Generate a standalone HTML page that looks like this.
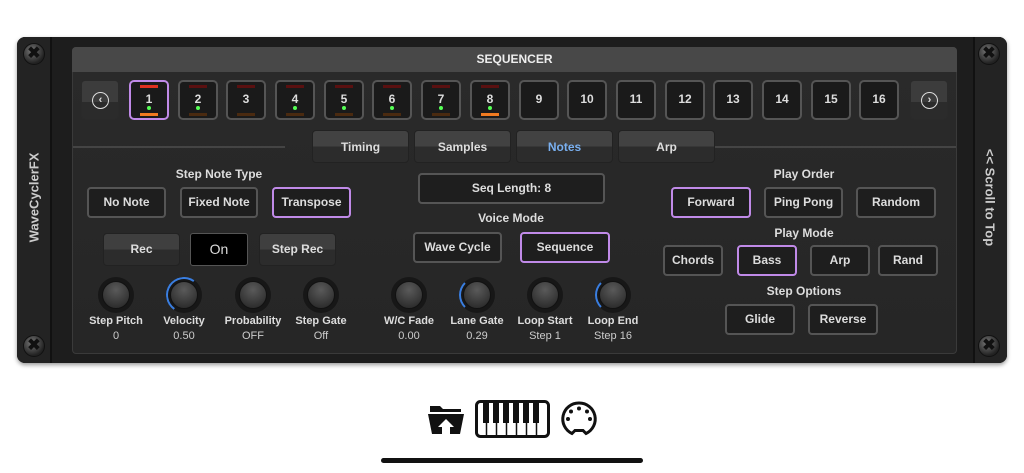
<!DOCTYPE html>
<html><head><meta charset="utf-8"><style>
*{box-sizing:border-box;margin:0;padding:0}
body{width:1024px;height:473px;background:#fff;position:relative;overflow:hidden;font-family:"Liberation Sans",sans-serif;font-weight:bold}
.a{position:absolute}
.outer{left:17px;top:37px;width:990px;height:326px;background:#1d1d1d;border-radius:8px;box-shadow:0 2px 4px rgba(0,0,0,.4)}
.rail{background:#232323}
.inner{left:72px;top:47px;width:885px;height:307px;background:linear-gradient(#2a2a2a,#262626);border:1px solid #3a3a3a;border-radius:4px}
.hdr{left:72px;top:47px;width:885px;height:25px;background:#484848;border-radius:4px 4px 0 0;color:#eee;font-size:12px;text-align:center;line-height:25px}
.screw{width:22px;height:22px;border-radius:50%;background:radial-gradient(circle at 40% 35%,#777,#222 70%);border:1px solid #111;color:#111;font-size:16px;text-align:center;line-height:20px}
.step{width:40px;height:40px;border:2px solid #555;border-radius:5px;background:#1a1a1a;color:#ddd;font-size:12px;text-align:center;line-height:34px}
.step .t{position:absolute;left:9px;top:3px;width:18px;height:3px;background:#5a1010}
.step .b{position:absolute;left:9px;bottom:2px;width:18px;height:3px;background:#4a2a10}
.step .d{position:absolute;left:16px;top:24px;width:4px;height:4px;border-radius:50%;background:#5f5}
.sel{border-color:#c08ae8!important}
.nav{width:38px;height:40px;border-radius:4px;background:linear-gradient(#3c3c3c 55%,#2b2b2b 55%);border:1px solid #2a2a2a}
.nav span{position:absolute;left:10px;top:11px;width:17px;height:17px;border:1.5px solid #ddd;border-radius:50%;color:#ddd;font-size:11px;text-align:center;line-height:14px}
.tab{width:97px;height:33px;border-radius:4px;background:linear-gradient(#424242 50%,#2c2c2c 50%);border:1px solid #222;color:#ddd;font-size:12px;text-align:center;line-height:33px}
.btn{height:31px;border:2px solid #555;border-radius:4px;background:#1e1e1e;color:#ddd;font-size:12px;text-align:center;line-height:27px}
.btn2{height:33px;border-radius:4px;background:linear-gradient(#3f3f3f 50%,#2c2c2c 50%);border:1px solid #222;color:#ddd;font-size:12px;text-align:center;line-height:31px}
.lbl{color:#ddd;font-size:12px;text-align:center;width:160px}
.knob{width:36px;height:36px;border-radius:50%;background:#171717}
.knob i{position:absolute;left:4px;top:4px;width:28px;height:28px;border-radius:50%;background:radial-gradient(circle at 50% 30%,#5a5a5a,#2a2a2a 85%);border:1px solid #111}
.arc{width:36px;height:36px;border-radius:50%;border:2px solid transparent}
.kl{width:90px;text-align:center;color:#ddd;font-size:11px}
.kv{width:90px;text-align:center;color:#ccc;font-size:11px;font-weight:normal}
.line{height:2px;background:#444}
</style></head><body>
<div class="a outer"></div>
<div class="a rail" style="left:17px;top:37px;width:35px;height:326px;border-radius:8px 0 0 8px;border-right:2px solid #111"></div>
<div class="a rail" style="left:973px;top:37px;width:34px;height:326px;border-radius:0 8px 8px 0;border-left:2px solid #111"></div>
<div class="a" style="left:-31px;top:190px;width:130px;text-align:center;color:#ccc;font-size:13px;transform:rotate(-90deg)">WaveCyclerFX</div>
<div class="a" style="left:930px;top:190px;width:120px;text-align:center;color:#ccc;font-size:13px;transform:rotate(90deg)">&lt;&lt; Scroll to Top</div>
<div class="a screw" style="left:23px;top:43px">✖</div>
<div class="a screw" style="left:978px;top:43px">✖</div>
<div class="a screw" style="left:23px;top:335px">✖</div>
<div class="a screw" style="left:978px;top:335px">✖</div>
<div class="a inner"></div>
<div class="a hdr">SEQUENCER</div>

<div class="a nav" style="left:81px;top:80px"><span>‹</span></div>
<div class="a nav" style="left:910px;top:80px"><span>›</span></div>

<div class="a step sel" style="left:129px;top:80px">1<div class="t" style="background:#e03020"></div><div class="d"></div><div class="b" style="background:#f07a20"></div></div>
<div class="a step" style="left:178px;top:80px">2<div class="t"></div><div class="d"></div><div class="b"></div></div>
<div class="a step" style="left:226px;top:80px">3<div class="t"></div><div class="b"></div></div>
<div class="a step" style="left:275px;top:80px">4<div class="t"></div><div class="d"></div><div class="b"></div></div>
<div class="a step" style="left:324px;top:80px">5<div class="t"></div><div class="d"></div><div class="b"></div></div>
<div class="a step" style="left:372px;top:80px">6<div class="t"></div><div class="d"></div><div class="b"></div></div>
<div class="a step" style="left:421px;top:80px">7<div class="t"></div><div class="d"></div><div class="b"></div></div>
<div class="a step" style="left:470px;top:80px">8<div class="t"></div><div class="d"></div><div class="b" style="background:#f07a20"></div></div>
<div class="a step" style="left:519px;top:80px">9</div>
<div class="a step" style="left:567px;top:80px">10</div>
<div class="a step" style="left:616px;top:80px">11</div>
<div class="a step" style="left:665px;top:80px">12</div>
<div class="a step" style="left:713px;top:80px">13</div>
<div class="a step" style="left:762px;top:80px">14</div>
<div class="a step" style="left:811px;top:80px">15</div>
<div class="a step" style="left:859px;top:80px">16</div>

<div class="a line" style="left:73px;top:146px;width:212px"></div>
<div class="a line" style="left:715px;top:146px;width:241px"></div>
<div class="a tab" style="left:312px;top:130px">Timing</div>
<div class="a tab" style="left:414px;top:130px">Samples</div>
<div class="a tab" style="left:516px;top:130px;color:#7ab0f0">Notes</div>
<div class="a tab" style="left:618px;top:130px">Arp</div>

<div class="a lbl" style="left:139px;top:167px">Step Note Type</div>
<div class="a btn" style="left:87px;top:187px;width:79px">No Note</div>
<div class="a btn" style="left:180px;top:187px;width:78px">Fixed Note</div>
<div class="a btn sel" style="left:272px;top:187px;width:79px">Transpose</div>

<div class="a btn" style="left:418px;top:173px;width:187px">Seq Length: 8</div>
<div class="a lbl" style="left:431px;top:211px">Voice Mode</div>
<div class="a btn" style="left:413px;top:232px;width:89px">Wave Cycle</div>
<div class="a btn sel" style="left:520px;top:232px;width:90px">Sequence</div>

<div class="a btn2" style="left:103px;top:233px;width:77px">Rec</div>
<div class="a" style="left:190px;top:233px;width:58px;height:33px;background:#000;border:1px solid #555;border-radius:3px;color:#ddd;font-size:14px;font-weight:normal;text-align:center;line-height:31px">On</div>
<div class="a btn2" style="left:259px;top:233px;width:77px">Step Rec</div>

<div class="a lbl" style="left:724px;top:167px">Play Order</div>
<div class="a btn sel" style="left:671px;top:187px;width:80px">Forward</div>
<div class="a btn" style="left:764px;top:187px;width:79px">Ping Pong</div>
<div class="a btn" style="left:856px;top:187px;width:80px">Random</div>
<div class="a lbl" style="left:724px;top:226px">Play Mode</div>
<div class="a btn" style="left:663px;top:245px;width:60px">Chords</div>
<div class="a btn sel" style="left:737px;top:245px;width:60px">Bass</div>
<div class="a btn" style="left:810px;top:245px;width:60px">Arp</div>
<div class="a btn" style="left:878px;top:245px;width:60px">Rand</div>
<div class="a lbl" style="left:724px;top:284px">Step Options</div>
<div class="a btn" style="left:725px;top:304px;width:70px">Glide</div>
<div class="a btn" style="left:808px;top:304px;width:70px">Reverse</div>

<!-- knobs -->
<div class="a knob" style="left:98px;top:277px"><i></i></div>
<div class="a knob" style="left:166px;top:277px"><i></i></div>
<div class="a arc" style="left:166px;top:277px;border-top-color:#3a7ee0;border-left-color:#3a7ee0;transform:rotate(-10deg)"></div>
<div class="a knob" style="left:235px;top:277px"><i></i></div>
<div class="a knob" style="left:303px;top:277px"><i></i></div>
<div class="a knob" style="left:391px;top:277px"><i></i></div>
<div class="a knob" style="left:459px;top:277px"><i></i></div>
<div class="a arc" style="left:459px;top:277px;border-left-color:#3a7ee0"></div>
<div class="a knob" style="left:527px;top:277px"><i></i></div>
<div class="a knob" style="left:595px;top:277px"><i></i></div>
<div class="a arc" style="left:595px;top:277px;border-left-color:#3a7ee0"></div>

<div class="a kl" style="left:71px;top:315px">Step Pitch</div><div class="a kv" style="left:71px;top:330px">0</div>
<div class="a kl" style="left:139px;top:315px">Velocity</div><div class="a kv" style="left:139px;top:330px">0.50</div>
<div class="a kl" style="left:208px;top:315px">Probability</div><div class="a kv" style="left:208px;top:330px">OFF</div>
<div class="a kl" style="left:276px;top:315px">Step Gate</div><div class="a kv" style="left:276px;top:330px">Off</div>
<div class="a kl" style="left:364px;top:315px">W/C Fade</div><div class="a kv" style="left:364px;top:330px">0.00</div>
<div class="a kl" style="left:432px;top:315px">Lane Gate</div><div class="a kv" style="left:432px;top:330px">0.29</div>
<div class="a kl" style="left:500px;top:315px">Loop Start</div><div class="a kv" style="left:500px;top:330px">Step 1</div>
<div class="a kl" style="left:568px;top:315px">Loop End</div><div class="a kv" style="left:568px;top:330px">Step 16</div>

<!-- bottom icons -->
<svg class="a" style="left:426px;top:400px" width="40" height="36" viewBox="0 0 40 36">
<path d="M4 6h10l3 3h18v3H4z" fill="#111"/>
<path d="M2 14h36l-4 20H6z" fill="#111"/>
<path d="M20 19l-8 8h4v7h8v-7h4z" fill="#fff"/>
</svg>
<svg class="a" style="left:475px;top:400px" width="75" height="38" viewBox="0 0 75 38">
<rect x="1.5" y="1.5" width="72" height="35" rx="4" fill="#fff" stroke="#111" stroke-width="3"/>
<g stroke="#111" stroke-width="1.5"><line x1="11.5" y1="3" x2="11.5" y2="35"/><line x1="21.5" y1="3" x2="21.5" y2="35"/><line x1="31.5" y1="3" x2="31.5" y2="35"/><line x1="41.5" y1="3" x2="41.5" y2="35"/><line x1="51.5" y1="3" x2="51.5" y2="35"/><line x1="61.5" y1="3" x2="61.5" y2="35"/></g>
<g fill="#111"><rect x="8" y="3" width="6" height="20"/><rect x="18" y="3" width="6" height="20"/><rect x="28" y="3" width="6" height="20"/><rect x="38" y="3" width="6" height="20"/><rect x="48" y="3" width="6" height="20"/><rect x="58" y="3" width="6" height="20"/></g>
</svg>
<svg class="a" style="left:559px;top:400px" width="40" height="38" viewBox="0 0 40 38">
<path d="M20 3a16 16 0 0 1 7 30.5l-3-3h-8l-3 3A16 16 0 0 1 20 3z" fill="none" stroke="#111" stroke-width="3"/>
<g fill="#111"><circle cx="20" cy="8.5" r="2"/><circle cx="12" cy="11.5" r="2"/><circle cx="28" cy="11.5" r="2"/><circle cx="9" cy="19" r="2"/><circle cx="31" cy="19" r="2"/></g>
</svg>
<div class="a" style="left:381px;top:458px;width:262px;height:5px;border-radius:3px;background:#111"></div>
</body></html>
